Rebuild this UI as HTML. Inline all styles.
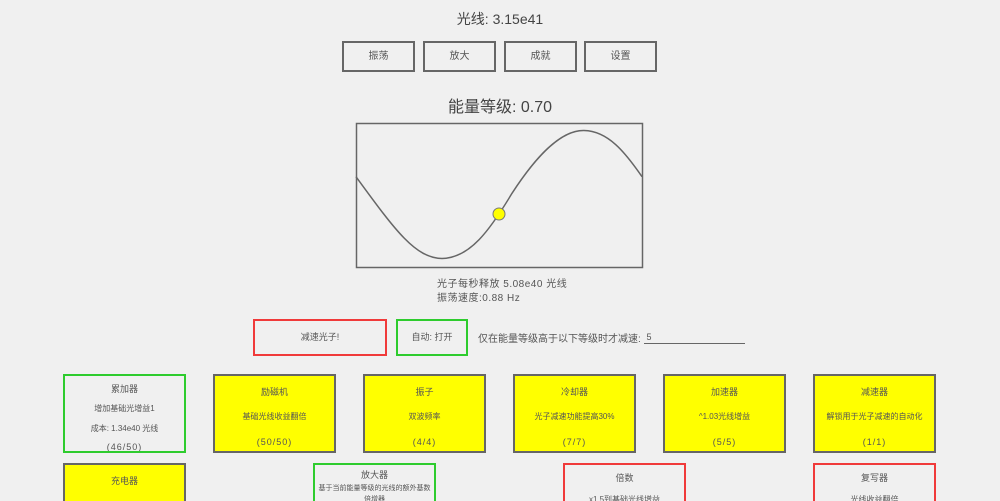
<!DOCTYPE html>
<html style="height:501px;overflow:hidden"><head><meta charset="utf-8"><style>
body{margin:0;width:1000px;height:501px;background:#f0f0f0;overflow:hidden;position:relative;font-family:"Liberation Sans","Noto Sans CJK SC",sans-serif;color:#555}
.a{position:absolute}
.btn{position:absolute;top:41px;width:69px;height:27px;border:2px solid #666;font-size:10px;line-height:27px;text-align:center;color:#555}
.mono{font-family:"Liberation Sans","Noto Sans CJK SC",sans-serif}
.card{position:absolute;width:119px;height:75px;border:2px solid #666;text-align:center;font-size:8px;color:#555;overflow:hidden}
.row2{height:36px;border-bottom:none}
.y{background:#ffff00}
.g{border-color:#2ecc2e}
.r{border-color:#f03a3a}
.card .t{font-size:9px;margin-top:6px}
.n{font-size:9px;letter-spacing:1px}
</style></head><body>
<div class="a mono" style="left:0;width:1000px;top:9px;text-align:center;font-size:14px;color:#444">光线: 3.15e41</div>
<div class="btn" style="left:342px">振荡</div>
<div class="btn" style="left:423px">放大</div>
<div class="btn" style="left:504px">成就</div>
<div class="btn" style="left:584px">设置</div>
<div class="a mono" style="left:0;width:1000px;top:93px;text-align:center;font-size:16px;color:#444">能量等级: 0.70</div>
<svg class="a" style="left:0;top:0" width="1000" height="501">
<rect x="356.5" y="123.5" width="286" height="144" fill="none" stroke="#666" stroke-width="1.5"/>
<path fill="none" stroke="#666" stroke-width="1.5" d="M356,176.7 C395,230 415,258 442,258.5 C470,258 490,230 512,193.3 C535,158 560,130 584,130.5 C608,131 625,152 642,176.7"/>
<circle cx="499" cy="214" r="6" fill="#ffff00" stroke="#777" stroke-width="1"/>
</svg>
<div class="a mono" style="left:437px;top:278px;font-size:10px;line-height:14px;color:#555;letter-spacing:0.5px">光子每秒释放 5.08e40 光线<br>振荡速度:0.88 Hz</div>
<div class="a" style="left:253px;top:319px;width:130px;height:33px;border:2px solid #f03a3a;font-size:9px;line-height:33px;text-align:center">减速光子!</div>
<div class="a" style="left:396px;top:319px;width:68px;height:33px;border:2px solid #2ecc2e;font-size:9px;line-height:33px;text-align:center">自动: 打开</div>
<div class="a" style="left:478px;top:330px;font-size:10px;color:#555">仅在能量等级高于以下等级时才减速:</div>
<div class="a" style="left:644px;top:332px;width:101px;height:11px;border-bottom:1px solid #666;font-size:9px">&nbsp;5</div>

<div class="card g" style="left:63px;top:374px"><div class="t">累加器</div><div style="margin-top:8px">增加基础光增益1</div><div class="mono" style="margin-top:9px">成本: 1.34e40 光线</div><div class="n" style="margin-top:8px">(46/50)</div></div>
<div class="card y" style="left:213px;top:374px"><div class="t" style="margin-top:9px">励磁机</div><div style="margin-top:13px">基础光线收益翻倍</div><div class="n" style="margin-top:15px">(50/50)</div></div>
<div class="card y" style="left:363px;top:374px"><div class="t" style="margin-top:9px">振子</div><div style="margin-top:13px">双波频率</div><div class="n" style="margin-top:15px">(4/4)</div></div>
<div class="card y" style="left:513px;top:374px"><div class="t" style="margin-top:9px">冷却器</div><div style="margin-top:13px">光子减速功能提高30%</div><div class="n" style="margin-top:15px">(7/7)</div></div>
<div class="card y" style="left:663px;top:374px"><div class="t" style="margin-top:9px">加速器</div><div style="margin-top:13px">^1.03光线增益</div><div class="n" style="margin-top:15px">(5/5)</div></div>
<div class="card y" style="left:813px;top:374px"><div class="t" style="margin-top:9px">减速器</div><div style="margin-top:13px">解锁用于光子减速的自动化</div><div class="n" style="margin-top:15px">(1/1)</div></div>

<div class="card y row2" style="left:63px;top:463px"><div class="t" style="margin-top:9px">充电器</div></div>
<div class="card g row2" style="left:313px;top:463px"><div class="t" style="margin-top:3px">放大器</div><div style="margin-top:2px;line-height:11px;font-size:7px;white-space:nowrap">基于当前能量等级的光线的额外基数<br>倍增器</div></div>
<div class="card r row2" style="left:563px;top:463px"><div class="t" style="margin-top:6px">倍数</div><div style="margin-top:10px">x1.5到基础光线增益</div></div>
<div class="card r row2" style="left:813px;top:463px"><div class="t" style="margin-top:6px">复写器</div><div style="margin-top:10px">光线收益翻倍</div></div>
</body></html>
